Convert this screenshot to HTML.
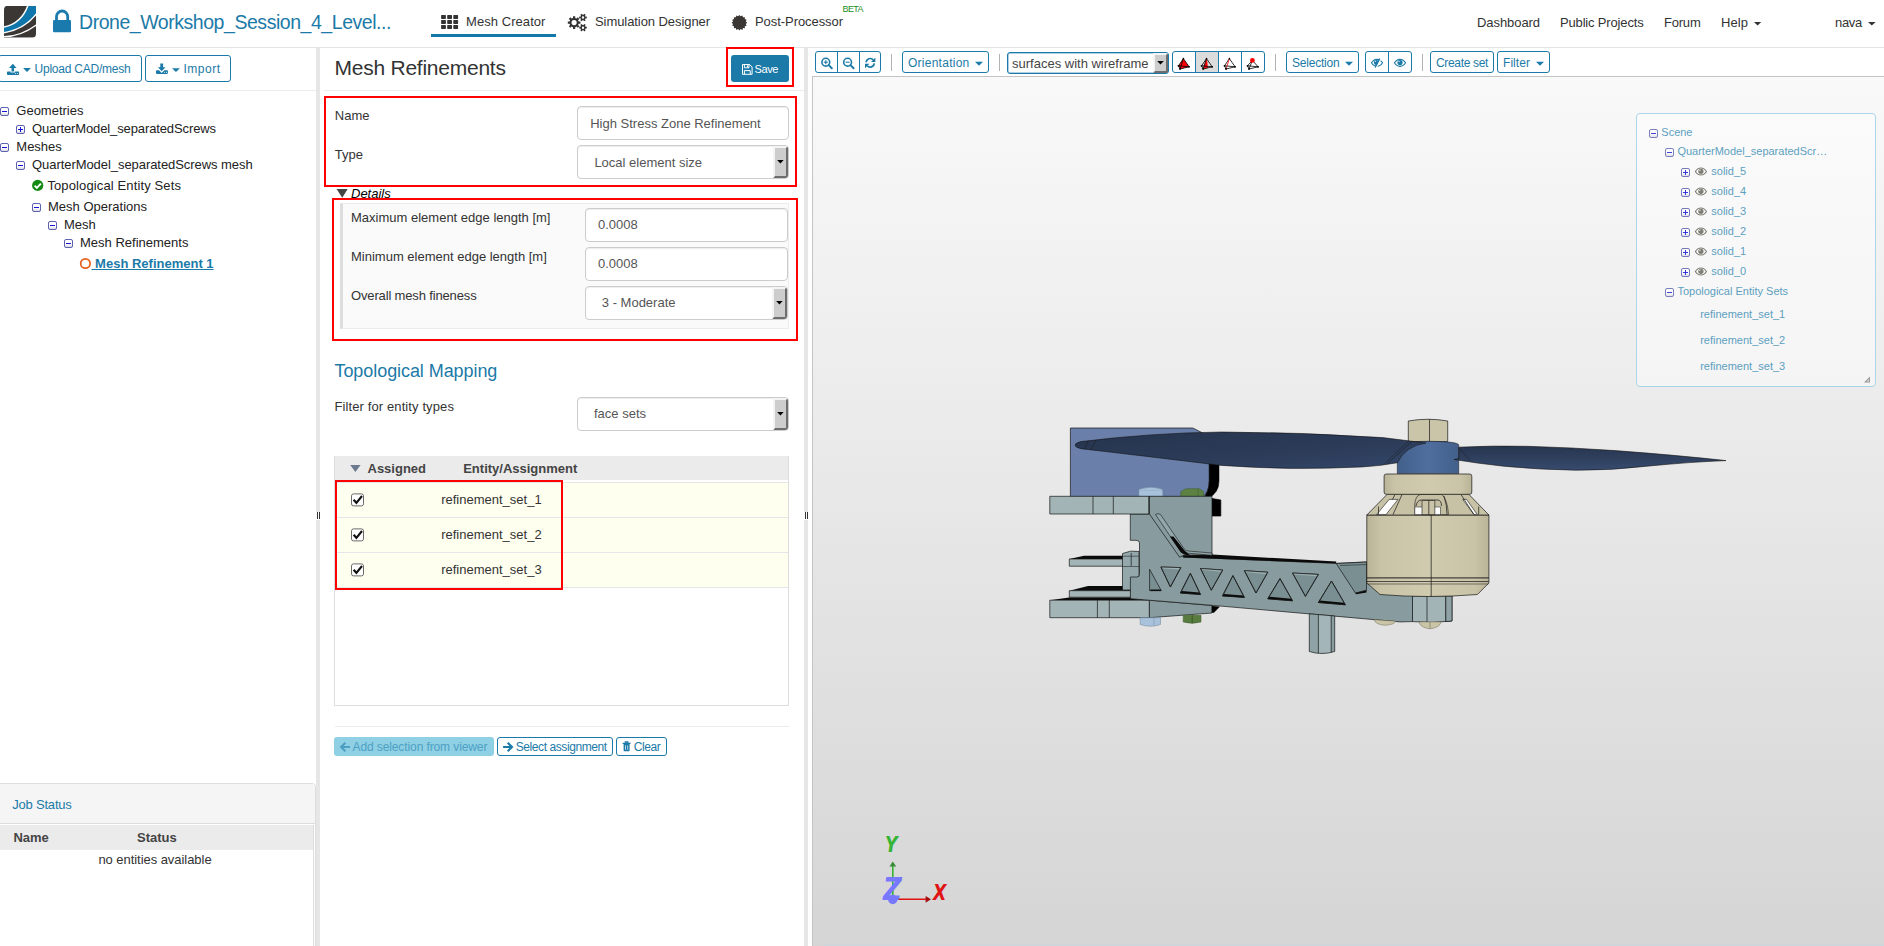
<!DOCTYPE html>
<html lang="en"><head><meta charset="utf-8"><title>SimScale Workbench</title>
<style>
html,body{margin:0;padding:0;}
body{width:1884px;height:946px;overflow:hidden;background:#fff;position:relative;font-family:"Liberation Sans",sans-serif;}
.t{position:absolute;white-space:nowrap;line-height:1;font-family:"Liberation Sans",sans-serif;}
.a{position:absolute;box-sizing:border-box;}
svg{position:absolute;overflow:visible;}

.btn{border:1px solid #1b7aa8;border-radius:3px;background:#fff;}
.inp{border:1px solid #ccc;border-radius:4px;background:#fff;box-shadow:inset 0 1px 1px rgba(0,0,0,.075);}
.red{border:2px solid #ff0000;}
.dd{background:#cdcdcd;border-top:2px solid #f4f4f4;border-left:2px solid #f4f4f4;border-right:2px solid #6e6c6c;border-bottom:2px solid #6e6c6c;border-radius:0 3px 3px 0;}
.sep{background:#b4b0b4;width:1px;}
.exp{border:1px solid #5a5ab4;border-radius:2px;background:linear-gradient(#fff,#e4e4f4);}

</style></head><body>
<div class="a " style="left:0px;top:47px;width:1884px;height:1px;background:#e4e4e4;"></div>
<div class="a " style="left:431px;top:34px;width:125px;height:3px;background:#1277a9;"></div>
<div class="a btn" style="left:-2px;top:55px;width:143.5px;height:26.5px;"></div>
<div class="a btn" style="left:145px;top:55px;width:85.5px;height:26.5px;"></div>
<div class="a " style="left:0px;top:90px;width:316px;height:1px;background:#ececec;"></div>
<div class="a " style="left:316px;top:48px;width:4px;height:898px;background:#e6e6e6;"></div>
<div class="a " style="left:316px;top:511.5px;width:4px;height:8px;background:#fff;"></div>
<div class="a " style="left:316.8px;top:512px;width:1px;height:7px;background:#333;"></div>
<div class="a " style="left:318.9px;top:512px;width:1px;height:7px;background:#333;"></div>
<div class="a " style="left:-1px;top:783.4px;width:316.5px;height:176.6px;background:#fff;border:1px solid #ddd;border-radius:0 4px 0 0;"></div>
<div class="a " style="left:0px;top:784.4px;width:314.5px;height:39.2px;background:#f5f5f5;border-bottom:1px solid #ddd;border-radius:0 3px 0 0;"></div>
<div class="a " style="left:0px;top:824.6px;width:312.5px;height:25.4px;background:#ebebeb;"></div>
<div class="a " style="left:312.5px;top:824.6px;width:1px;height:121.4px;background:#ddd;"></div>
<div class="a " style="left:324px;top:90px;width:480px;height:1px;background:#ececec;"></div>
<div class="a " style="left:731px;top:55px;width:58px;height:26.5px;background:#1b7aa8;border-radius:3px;"></div>
<div class="a red" style="left:726px;top:47px;width:68px;height:40px;"></div>
<div class="a red" style="left:324px;top:96px;width:473px;height:91px;"></div>
<div class="a inp" style="left:577px;top:106px;width:212px;height:34px;"></div>
<div class="a inp" style="left:577px;top:145px;width:212px;height:34px;"></div>
<div class="a dd" style="left:773px;top:146px;width:15px;height:32px;"></div>
<div class="a " style="left:340px;top:203px;width:448.7px;height:126px;background:#fafafa;border:1px solid #ececec;border-left:3px solid #ddd;"></div>
<div class="a inp" style="left:585px;top:208px;width:203px;height:34px;"></div>
<div class="a inp" style="left:585px;top:247px;width:203px;height:34px;"></div>
<div class="a inp" style="left:585px;top:286px;width:203px;height:34px;"></div>
<div class="a dd" style="left:772px;top:287px;width:15px;height:32px;"></div>
<div class="a red" style="left:332px;top:198px;width:466px;height:143px;"></div>
<div class="a inp" style="left:577px;top:397px;width:212px;height:34px;"></div>
<div class="a dd" style="left:773px;top:398px;width:15px;height:32px;"></div>
<div class="a " style="left:334px;top:456px;width:455px;height:250px;border:1px solid #ddd;background:#fff;"></div>
<div class="a " style="left:335px;top:456px;width:453px;height:24px;background:#ebebeb;"></div>
<div class="a " style="left:335px;top:482px;width:453px;height:36px;background:#fffff0;border-bottom:1px solid #e4e6e8;border-top:1px solid #e6e6e8;"></div>
<div class="a " style="left:335px;top:518px;width:453px;height:35px;background:#fffff0;border-bottom:1px solid #e4e6e8;"></div>
<div class="a " style="left:335px;top:553px;width:453px;height:35px;background:#fffff0;border-bottom:1px solid #e4e6e8;"></div>
<div class="a red" style="left:335px;top:480px;width:228px;height:110px;"></div>
<div class="a " style="left:334.5px;top:726px;width:454.2px;height:1px;background:#ececec;"></div>
<div class="a " style="left:334.3px;top:737px;width:159.5px;height:19px;background:#8fd0e4;border-radius:3px;"></div>
<div class="a btn" style="left:497.1px;top:737px;width:115.7px;height:19px;"></div>
<div class="a btn" style="left:616px;top:737px;width:50.7px;height:19px;"></div>
<div class="a " style="left:804px;top:48px;width:4px;height:898px;background:#e6e6e6;"></div>
<div class="a " style="left:804px;top:511.5px;width:4px;height:8px;background:#fff;"></div>
<div class="a " style="left:804.8px;top:512px;width:1px;height:7px;background:#333;"></div>
<div class="a " style="left:806.9px;top:512px;width:1px;height:7px;background:#333;"></div>
<div class="a " style="left:812px;top:76px;width:1072px;height:870px;background:linear-gradient(#f9f9f9,#d5d5d5);border-top:1px solid #c4c4c4;border-left:1px solid #c4c4c4;"></div>
<div class="a " style="left:824px;top:945px;width:1060px;height:1px;background:#c8d8df;"></div>
<div class="a btn" style="left:815px;top:51px;width:65.7px;height:22px;"></div>
<div class="a " style="left:837px;top:51px;width:1px;height:22px;background:#1b7aa8;"></div>
<div class="a " style="left:859px;top:51px;width:1px;height:22px;background:#1b7aa8;"></div>
<div class="a sep" style="left:891px;top:54px;width:1px;height:17px;"></div>
<div class="a btn" style="left:902px;top:51px;width:87px;height:22px;"></div>
<div class="a sep" style="left:999px;top:54px;width:1px;height:17px;"></div>
<div class="a " style="left:1007px;top:52px;width:162px;height:22px;border:1px solid #1b7aa8;border-radius:3px;background:#fff;box-shadow:inset 0 0 0 0.5px #5aa0c4;"></div>
<div class="a dd" style="left:1153px;top:53px;width:15px;height:20px;border-radius:0 2px 2px 0;"></div>
<div class="a btn" style="left:1172px;top:51px;width:93px;height:22px;"></div>
<div class="a " style="left:1195.5px;top:52px;width:22.5px;height:20px;background:#dcdcdc;"></div>
<div class="a " style="left:1195px;top:51px;width:1px;height:22px;background:#1b7aa8;"></div>
<div class="a " style="left:1218px;top:51px;width:1px;height:22px;background:#1b7aa8;"></div>
<div class="a " style="left:1241px;top:51px;width:1px;height:22px;background:#1b7aa8;"></div>
<div class="a sep" style="left:1275px;top:54px;width:1px;height:17px;"></div>
<div class="a btn" style="left:1286px;top:51px;width:73px;height:22px;"></div>
<div class="a btn" style="left:1365px;top:51px;width:46.5px;height:22px;"></div>
<div class="a " style="left:1388px;top:51px;width:1px;height:22px;background:#1b7aa8;"></div>
<div class="a sep" style="left:1422px;top:54px;width:1px;height:17px;"></div>
<div class="a btn" style="left:1430px;top:51px;width:63.7px;height:22px;"></div>
<div class="a btn" style="left:1497px;top:51px;width:52.7px;height:22px;"></div>
<div class="a " style="left:1636.3px;top:113px;width:239.3px;height:274.4px;border:1px solid #a9d6e8;border-radius:4px;background:rgba(255,255,255,0.45);"></div>
<svg style="left:0;top:0" width="1884" height="946" viewBox="0 0 1884 946"><g transform="translate(4,5.8)"><clipPath id="lgc"><path d="M4,0 H32 V28 Q32,32 28,32 H0 V4 Q0,0 4,0 Z"/></clipPath><g clip-path="url(#lgc)"><rect x="0" y="0" width="32" height="32" fill="#3b3734"/><path d="M0,21.6 Q17.8,17.6 24.4,0 L32,0 L32,8 Q20.5,23.5 0,27 Z" fill="#0f76ab"/><path d="M0,21.3 Q17.6,17.6 24,-0.5" fill="none" stroke="#fff" stroke-width="1.5"/><path d="M0,27 Q20.5,23.5 32.3,8.2" fill="none" stroke="#fff" stroke-width="1.4"/><path d="M0,30.9 Q17,30.6 32.3,19.2" fill="none" stroke="#fff" stroke-width="1.3"/></g></g>
<rect x="53" y="20" width="18" height="12.2" rx="1.2" fill="#1a7aad" stroke="none" stroke-width="1" />
<path d="M56.5,21 V16.6 A5.6,5.6 0 0 1 67.7,16.6 V21" fill="none" stroke="#1a7aad" stroke-width="2.8" />
<rect x="441.1" y="15.1" width="4.8" height="3.8" rx="0.6" fill="#333" stroke="none" stroke-width="1" />
<rect x="447.2" y="15.1" width="4.8" height="3.8" rx="0.6" fill="#333" stroke="none" stroke-width="1" />
<rect x="453.3" y="15.1" width="4.8" height="3.8" rx="0.6" fill="#333" stroke="none" stroke-width="1" />
<rect x="441.1" y="20.1" width="4.8" height="3.8" rx="0.6" fill="#333" stroke="none" stroke-width="1" />
<rect x="447.2" y="20.1" width="4.8" height="3.8" rx="0.6" fill="#333" stroke="none" stroke-width="1" />
<rect x="453.3" y="20.1" width="4.8" height="3.8" rx="0.6" fill="#333" stroke="none" stroke-width="1" />
<rect x="441.1" y="25.1" width="4.8" height="3.8" rx="0.6" fill="#333" stroke="none" stroke-width="1" />
<rect x="447.2" y="25.1" width="4.8" height="3.8" rx="0.6" fill="#333" stroke="none" stroke-width="1" />
<rect x="453.3" y="25.1" width="4.8" height="3.8" rx="0.6" fill="#333" stroke="none" stroke-width="1" />
<path d="M580.40,21.50 L580.40,23.70 L578.67,23.70 L578.11,25.06 L579.34,26.28 L577.78,27.84 L576.56,26.61 L575.20,27.17 L575.20,28.90 L573.00,28.90 L573.00,27.17 L571.64,26.61 L570.42,27.84 L568.86,26.28 L570.09,25.06 L569.53,23.70 L567.80,23.70 L567.80,21.50 L569.53,21.50 L570.09,20.14 L568.86,18.92 L570.42,17.36 L571.64,18.59 L573.00,18.03 L573.00,16.30 L575.20,16.30 L575.20,18.03 L576.56,18.59 L577.78,17.36 L579.34,18.92 L578.11,20.14 L578.67,21.50Z M576.70,22.60 A2.6,2.6 0 1 0 571.50,22.60 A2.6,2.6 0 1 0 576.70,22.60Z" fill="#333" fill-rule="evenodd"/>
<path d="M586.80,16.61 L586.80,18.39 L585.57,18.33 L585.01,19.31 L585.67,20.34 L584.13,21.23 L583.56,20.14 L582.44,20.14 L581.87,21.23 L580.33,20.34 L580.99,19.31 L580.43,18.33 L579.20,18.39 L579.20,16.61 L580.43,16.67 L580.99,15.69 L580.33,14.66 L581.87,13.77 L582.44,14.86 L583.56,14.86 L584.13,13.77 L585.67,14.66 L585.01,15.69 L585.57,16.67Z M584.20,17.50 A1.2,1.2 0 1 0 581.80,17.50 A1.2,1.2 0 1 0 584.20,17.50Z" fill="#333" fill-rule="evenodd"/>
<path d="M586.80,26.81 L586.80,28.59 L585.57,28.53 L585.01,29.51 L585.67,30.54 L584.13,31.43 L583.56,30.34 L582.44,30.34 L581.87,31.43 L580.33,30.54 L580.99,29.51 L580.43,28.53 L579.20,28.59 L579.20,26.81 L580.43,26.87 L580.99,25.89 L580.33,24.86 L581.87,23.97 L582.44,25.06 L583.56,25.06 L584.13,23.97 L585.67,24.86 L585.01,25.89 L585.57,26.87Z M584.20,27.70 A1.2,1.2 0 1 0 581.80,27.70 A1.2,1.2 0 1 0 584.20,27.70Z" fill="#333" fill-rule="evenodd"/>
<polygon points="747.20,22.70 745.78,23.97 746.61,25.68 744.80,26.31 744.92,28.22 743.01,28.10 742.38,29.91 740.67,29.08 739.40,30.50 738.13,29.08 736.42,29.91 735.79,28.10 733.88,28.22 734.00,26.31 732.19,25.68 733.02,23.97 731.60,22.70 733.02,21.43 732.19,19.72 734.00,19.09 733.88,17.18 735.79,17.30 736.42,15.49 738.13,16.32 739.40,14.90 740.67,16.32 742.38,15.49 743.01,17.30 744.92,17.18 744.80,19.09 746.61,19.72 745.78,21.43" fill="#3b3734" stroke="none" stroke-width="1" />
<polygon points="1754.00,22.00 1761.20,22.00 1757.60,25.60" fill="#333" stroke="none" stroke-width="1" />
<polygon points="1868.00,22.00 1875.60,22.00 1871.80,25.60" fill="#333" stroke="none" stroke-width="1" />
<polygon points="12.90,63.80 16.60,67.90 14.10,67.90 14.10,71.60 11.50,71.60 11.50,67.90 9.00,67.90" fill="#1b7aa8" stroke="none" stroke-width="1" />
<path d="M7.8,71.4 H10.6 V72.4 H15 V71.4 H18.3 Q19.1,71.4 19.1,72.2 V74.2 Q19.1,75 18.3,75 H7.8 Q7,75 7,74.2 V72.2 Q7,71.4 7.8,71.4 Z" fill="#1b7aa8" stroke="none" stroke-width="1" />
<rect x="15" y="73" width="0.9" height="0.9" rx="0" fill="#fff" stroke="none" stroke-width="1" />
<rect x="16.9" y="73" width="0.9" height="0.9" rx="0" fill="#fff" stroke="none" stroke-width="1" />
<polygon points="23.10,67.90 30.90,67.90 27.00,71.90" fill="#1b7aa8" stroke="none" stroke-width="1" />
<polygon points="160.30,63.60 163.10,63.60 163.10,67.20 165.50,67.20 161.70,71.30 157.90,67.20 160.30,67.20" fill="#1b7aa8" stroke="none" stroke-width="1" />
<path d="M156.8,70.3 H159 L161.7,73 L164.4,70.3 H167.1 Q167.9,70.3 167.9,71.1 V73.1 Q167.9,73.9 167.1,73.9 H156.8 Q156,73.9 156,73.1 V71.1 Q156,70.3 156.8,70.3 Z" fill="#1b7aa8" stroke="none" stroke-width="1" />
<rect x="164.2" y="71.9" width="0.9" height="0.9" rx="0" fill="#fff" stroke="none" stroke-width="1" />
<rect x="166" y="71.9" width="0.9" height="0.9" rx="0" fill="#fff" stroke="none" stroke-width="1" />
<polygon points="172.00,68.20 179.90,68.20 175.95,72.00" fill="#1b7aa8" stroke="none" stroke-width="1" />
<defs><linearGradient id="expg" x1="0" y1="0" x2="0" y2="1"><stop offset="0" stop-color="#fff"/><stop offset="0.55" stop-color="#fff"/><stop offset="1" stop-color="#d4d4dc"/></linearGradient></defs>
<g opacity="1.0"><defs></defs><rect x="0.5" y="107.5" width="8" height="8" rx="1.5" fill="url(#expg)" stroke="#5c62b0" stroke-width="1" /><rect x="2" y="111" width="5" height="1" rx="0" fill="#1414d8" stroke="none" stroke-width="1" /></g>
<g opacity="1.0"><defs></defs><rect x="16.5" y="125.5" width="8" height="8" rx="1.5" fill="url(#expg)" stroke="#5c62b0" stroke-width="1" /><rect x="18" y="129" width="5" height="1" rx="0" fill="#1414d8" stroke="none" stroke-width="1" /><rect x="20" y="127" width="1" height="5" rx="0" fill="#1414d8" stroke="none" stroke-width="1" /></g>
<g opacity="1.0"><defs></defs><rect x="0.5" y="143.5" width="8" height="8" rx="1.5" fill="url(#expg)" stroke="#5c62b0" stroke-width="1" /><rect x="2" y="147" width="5" height="1" rx="0" fill="#1414d8" stroke="none" stroke-width="1" /></g>
<g opacity="1.0"><defs></defs><rect x="16.5" y="161.5" width="8" height="8" rx="1.5" fill="url(#expg)" stroke="#5c62b0" stroke-width="1" /><rect x="18" y="165" width="5" height="1" rx="0" fill="#1414d8" stroke="none" stroke-width="1" /></g>
<g opacity="1.0"><defs></defs><rect x="32.5" y="203.5" width="8" height="8" rx="1.5" fill="url(#expg)" stroke="#5c62b0" stroke-width="1" /><rect x="34" y="207" width="5" height="1" rx="0" fill="#1414d8" stroke="none" stroke-width="1" /></g>
<g opacity="1.0"><defs></defs><rect x="48.5" y="221.5" width="8" height="8" rx="1.5" fill="url(#expg)" stroke="#5c62b0" stroke-width="1" /><rect x="50" y="225" width="5" height="1" rx="0" fill="#1414d8" stroke="none" stroke-width="1" /></g>
<g opacity="1.0"><defs></defs><rect x="64.5" y="239.5" width="8" height="8" rx="1.5" fill="url(#expg)" stroke="#5c62b0" stroke-width="1" /><rect x="66" y="243" width="5" height="1" rx="0" fill="#1414d8" stroke="none" stroke-width="1" /></g>
<circle cx="37.7" cy="185.4" r="5.6" fill="#138a13" stroke="none" stroke-width="1" />
<path d="M34.6,185.6 L36.8,187.8 L40.9,183.6" fill="none" stroke="#fff" stroke-width="1.9" stroke-linecap="butt" stroke-linejoin="miter"/>
<circle cx="85.4" cy="263.5" r="4.7" fill="none" stroke="#e8601c" stroke-width="1.7" />
<path d="M742.5,64.5 H749.6 L752.1,67 V74.3 H742.5 Z" fill="none" stroke="#fff" stroke-width="1" />
<path d="M744.4,64.5 V67.8 H749 V64.5" fill="none" stroke="#fff" stroke-width="1" />
<rect x="746.9" y="65.3" width="1.2" height="1.8" rx="0" fill="#fff" stroke="none" stroke-width="1" />
<path d="M744.4,74.3 V70.6 H750.2 V74.3" fill="none" stroke="#fff" stroke-width="1" />
<polygon points="336.70,189.00 347.70,189.00 342.20,197.80" fill="#444" stroke="none" stroke-width="1" />
<polygon points="350.20,465.00 360.60,465.00 355.40,472.00" fill="#6b7a8f" stroke="none" stroke-width="1" />
<rect x="351.5" y="493.9" width="12" height="12" rx="2" fill="#fff" stroke="#6a6a6a" stroke-width="1" />
<path d="M353.6,499.7 L356.4,502.79999999999995 L362.0,496.0" fill="none" stroke="#111" stroke-width="2.1" />
<rect x="351.5" y="528.9" width="12" height="12" rx="2" fill="#fff" stroke="#6a6a6a" stroke-width="1" />
<path d="M353.6,534.6999999999999 L356.4,537.8 L362.0,531.0" fill="none" stroke="#111" stroke-width="2.1" />
<rect x="351.5" y="563.9" width="12" height="12" rx="2" fill="#fff" stroke="#6a6a6a" stroke-width="1" />
<path d="M353.6,569.6999999999999 L356.4,572.8 L362.0,566.0" fill="none" stroke="#111" stroke-width="2.1" />
<polygon points="777.10,160.00 783.70,160.00 780.40,163.60" fill="#000" stroke="none" stroke-width="1" />
<polygon points="776.10,301.00 782.70,301.00 779.40,304.60" fill="#000" stroke="none" stroke-width="1" />
<polygon points="777.10,412.00 783.70,412.00 780.40,415.60" fill="#000" stroke="none" stroke-width="1" />
<polygon points="1157.20,60.90 1163.80,60.90 1160.50,64.50" fill="#000" stroke="none" stroke-width="1" />
<path d="M350.0,747 H341.4 M345.4,742.8 L341.09999999999997,747 L345.4,751.2" fill="none" stroke="#4da0c4" stroke-width="2.1" opacity="1" stroke-linejoin="miter"/>
<path d="M503.1,747 H511.70000000000005 M507.70000000000005,742.8 L512.0,747 L507.70000000000005,751.2" fill="none" stroke="#1b7aa8" stroke-width="2.1" opacity="1" stroke-linejoin="miter"/>
<path d="M622.6,743.4 H630.6 M625.3,743.2 V741.9 H627.9 V743.2" fill="none" stroke="#1b7aa8" stroke-width="1.2" />
<path d="M623.6,744 V750.3 Q623.6,751.2 624.5,751.2 H628.7 Q629.6,751.2 629.6,750.3 V744 Z" fill="#1b7aa8" stroke="none" stroke-width="1" />
<line x1="625.5" y1="745.3" x2="625.5" y2="749.8" stroke="#fff" stroke-width="0.7" />
<line x1="627.7" y1="745.3" x2="627.7" y2="749.8" stroke="#fff" stroke-width="0.7" />
<circle cx="825.8" cy="62.2" r="3.9" fill="none" stroke="#1b7aa8" stroke-width="1.6" /><line x1="828.7" y1="65.1" x2="831.8" y2="68.2" stroke="#1b7aa8" stroke-width="2" stroke-linecap="round"/><line x1="823.8" y1="62.2" x2="827.8" y2="62.2" stroke="#1b7aa8" stroke-width="1.1" /><line x1="825.8" y1="60.2" x2="825.8" y2="64.2" stroke="#1b7aa8" stroke-width="1.1" />
<circle cx="847.6" cy="62.2" r="3.9" fill="none" stroke="#1b7aa8" stroke-width="1.6" /><line x1="850.5" y1="65.1" x2="853.6" y2="68.2" stroke="#1b7aa8" stroke-width="2" stroke-linecap="round"/><line x1="845.6" y1="62.2" x2="849.6" y2="62.2" stroke="#1b7aa8" stroke-width="1.1" />
<path d="M866.2,62.199999999999996 A4.0,4.0 0 0 1 873.2,59.9" fill="none" stroke="#1b7aa8" stroke-width="1.7" />
<polygon points="875.40,57.40 875.40,61.90 871.10,61.90" fill="#1b7aa8" stroke="none" stroke-width="1" />
<path d="M874.2,63.4 A4.0,4.0 0 0 1 867.2,65.7" fill="none" stroke="#1b7aa8" stroke-width="1.7" />
<polygon points="865.00,68.20 865.00,63.70 869.30,63.70" fill="#1b7aa8" stroke="none" stroke-width="1" />
<polygon points="975.00,61.80 983.00,61.80 979.00,65.80" fill="#1b7aa8" stroke="none" stroke-width="1" />
<polygon points="1345.00,61.80 1353.00,61.80 1349.00,65.80" fill="#1b7aa8" stroke="none" stroke-width="1" />
<polygon points="1536.00,61.80 1544.00,61.80 1540.00,65.80" fill="#1b7aa8" stroke="none" stroke-width="1" />
<polygon points="1183.40,58.60 1178.50,65.80 1180.00,69.00 1189.10,66.80" fill="#ff0000" stroke="none" stroke-width="1" /><line x1="1183.4" y1="58.6" x2="1178.5" y2="65.8" stroke="#000" stroke-width="0.8" /><line x1="1183.4" y1="58.6" x2="1180" y2="69" stroke="#000" stroke-width="0.8" /><line x1="1183.4" y1="58.6" x2="1189.1" y2="66.8" stroke="#000" stroke-width="0.8" /><line x1="1178.5" y1="65.8" x2="1180" y2="69" stroke="#000" stroke-width="0.8" /><line x1="1180" y1="69" x2="1189.1" y2="66.8" stroke="#000" stroke-width="0.8" /><line x1="1178.5" y1="65.8" x2="1189.1" y2="66.8" stroke="#000" stroke-width="0.8" /><circle cx="1178.5" cy="65.8" r="0.9" fill="#000" stroke="none" stroke-width="1" /><circle cx="1180" cy="69" r="0.9" fill="#000" stroke="none" stroke-width="1" /><circle cx="1189.1" cy="66.8" r="0.9" fill="#000" stroke="none" stroke-width="1" /><circle cx="1183.4" cy="58.6" r="0.8" fill="#000" stroke="none" stroke-width="1" />
<polygon points="1206.50,58.60 1203.10,69.00 1207.80,68.00 1207.40,62.00" fill="#ff0000" stroke="none" stroke-width="1" /><line x1="1206.5" y1="58.6" x2="1201.6" y2="65.8" stroke="#000" stroke-width="0.8" /><line x1="1206.5" y1="58.6" x2="1203.1" y2="69" stroke="#000" stroke-width="0.8" /><line x1="1206.5" y1="58.6" x2="1212.2" y2="66.8" stroke="#000" stroke-width="0.8" /><line x1="1201.6" y1="65.8" x2="1203.1" y2="69" stroke="#000" stroke-width="0.8" /><line x1="1203.1" y1="69" x2="1212.2" y2="66.8" stroke="#000" stroke-width="0.8" /><line x1="1201.6" y1="65.8" x2="1212.2" y2="66.8" stroke="#000" stroke-width="0.8" /><circle cx="1201.6" cy="65.8" r="0.9" fill="#000" stroke="none" stroke-width="1" /><circle cx="1203.1" cy="69" r="0.9" fill="#000" stroke="none" stroke-width="1" /><circle cx="1212.2" cy="66.8" r="0.9" fill="#000" stroke="none" stroke-width="1" /><circle cx="1206.5" cy="58.6" r="0.8" fill="#000" stroke="none" stroke-width="1" />
<line x1="1229.4" y1="58.6" x2="1224.5" y2="65.8" stroke="#000" stroke-width="0.8" /><line x1="1229.4" y1="58.6" x2="1226" y2="69" stroke="#ff0000" stroke-width="0.8" /><line x1="1229.4" y1="58.6" x2="1235.1" y2="66.8" stroke="#000" stroke-width="0.8" /><line x1="1224.5" y1="65.8" x2="1226" y2="69" stroke="#000" stroke-width="0.8" /><line x1="1226" y1="69" x2="1235.1" y2="66.8" stroke="#000" stroke-width="0.8" /><line x1="1224.5" y1="65.8" x2="1235.1" y2="66.8" stroke="#000" stroke-width="0.8" /><circle cx="1224.5" cy="65.8" r="0.9" fill="#000" stroke="none" stroke-width="1" /><circle cx="1226" cy="69" r="0.9" fill="#000" stroke="none" stroke-width="1" /><circle cx="1235.1" cy="66.8" r="0.9" fill="#000" stroke="none" stroke-width="1" /><circle cx="1229.4" cy="58.6" r="0.8" fill="#000" stroke="none" stroke-width="1" />
<line x1="1252.4" y1="60.4" x2="1247.5" y2="65.8" stroke="#000" stroke-width="0.8" /><line x1="1252.4" y1="60.4" x2="1249" y2="69" stroke="#000" stroke-width="0.8" /><line x1="1252.4" y1="60.4" x2="1258.1" y2="66.8" stroke="#000" stroke-width="0.8" /><line x1="1247.5" y1="65.8" x2="1249" y2="69" stroke="#000" stroke-width="0.8" /><line x1="1249" y1="69" x2="1258.1" y2="66.8" stroke="#000" stroke-width="0.8" /><line x1="1247.5" y1="65.8" x2="1258.1" y2="66.8" stroke="#000" stroke-width="0.8" /><circle cx="1247.5" cy="65.8" r="0.9" fill="#000" stroke="none" stroke-width="1" /><circle cx="1249" cy="69" r="0.9" fill="#000" stroke="none" stroke-width="1" /><circle cx="1258.1" cy="66.8" r="0.9" fill="#000" stroke="none" stroke-width="1" /><circle cx="1252.4" cy="60.4" r="2.4" fill="#ff0000" stroke="none" stroke-width="1" />
<g opacity="1"><path d="M1371.5,62.8 C1374.25,58.13333333333333 1379.75,58.13333333333333 1382.5,62.8 C1379.75,67.46666666666667 1374.25,67.46666666666667 1371.5,62.8 Z" fill="none" stroke="#1b7aa8" stroke-width="1.15" /><circle cx="1376.4" cy="62.6" r="2.5" fill="#1b7aa8" stroke="none" stroke-width="1" /><circle cx="1375.5" cy="61.4" r="0.7" fill="#fff" stroke="none" stroke-width="1" opacity="0.7"/><line x1="1381" y1="58.5" x2="1376.4" y2="67.4" stroke="#fff" stroke-width="1.5" /><line x1="1379.7" y1="58.6" x2="1375.1" y2="67.5" stroke="#1b7aa8" stroke-width="1.4" /></g>
<g opacity="1"><path d="M1394.5,62.8 C1397.25,58.13333333333333 1402.75,58.13333333333333 1405.5,62.8 C1402.75,67.46666666666667 1397.25,67.46666666666667 1394.5,62.8 Z" fill="none" stroke="#1b7aa8" stroke-width="1.15" /><circle cx="1400" cy="62.6" r="2.6" fill="#1b7aa8" stroke="none" stroke-width="1" /><circle cx="1399" cy="61.5" r="0.75" fill="#fff" stroke="none" stroke-width="1" opacity="0.75"/></g>
<g opacity="0.8"><defs></defs><rect x="1649.5" y="129.5" width="8" height="8" rx="1.5" fill="url(#expg)" stroke="#5c62b0" stroke-width="1" /><rect x="1651" y="133" width="5" height="1" rx="0" fill="#1414d8" stroke="none" stroke-width="1" /></g>
<g opacity="0.8"><defs></defs><rect x="1665.5" y="148.5" width="8" height="8" rx="1.5" fill="url(#expg)" stroke="#5c62b0" stroke-width="1" /><rect x="1667" y="152" width="5" height="1" rx="0" fill="#1414d8" stroke="none" stroke-width="1" /></g>
<g opacity="0.8"><defs></defs><rect x="1665.5" y="288.5" width="8" height="8" rx="1.5" fill="url(#expg)" stroke="#5c62b0" stroke-width="1" /><rect x="1667" y="292" width="5" height="1" rx="0" fill="#1414d8" stroke="none" stroke-width="1" /></g>
<g opacity="0.85"><defs></defs><rect x="1681.5" y="168.5" width="8" height="8" rx="1.5" fill="url(#expg)" stroke="#5c62b0" stroke-width="1" /><rect x="1683" y="172" width="5" height="1" rx="0" fill="#1414d8" stroke="none" stroke-width="1" /><rect x="1685" y="170" width="1" height="5" rx="0" fill="#1414d8" stroke="none" stroke-width="1" /></g>
<g opacity="1"><path d="M1695.4,171.5 C1698.15,166.83333333333334 1703.65,166.83333333333334 1706.4,171.5 C1703.65,176.16666666666666 1698.15,176.16666666666666 1695.4,171.5 Z" fill="none" stroke="#7d7d74" stroke-width="1.15" /><circle cx="1700.9" cy="171.3" r="2.6" fill="#7d7d74" stroke="none" stroke-width="1" /><circle cx="1699.9" cy="170.2" r="0.75" fill="#fff" stroke="none" stroke-width="1" opacity="0.75"/></g>
<g opacity="0.85"><defs></defs><rect x="1681.5" y="188.5" width="8" height="8" rx="1.5" fill="url(#expg)" stroke="#5c62b0" stroke-width="1" /><rect x="1683" y="192" width="5" height="1" rx="0" fill="#1414d8" stroke="none" stroke-width="1" /><rect x="1685" y="190" width="1" height="5" rx="0" fill="#1414d8" stroke="none" stroke-width="1" /></g>
<g opacity="1"><path d="M1695.4,191.5 C1698.15,186.83333333333334 1703.65,186.83333333333334 1706.4,191.5 C1703.65,196.16666666666666 1698.15,196.16666666666666 1695.4,191.5 Z" fill="none" stroke="#7d7d74" stroke-width="1.15" /><circle cx="1700.9" cy="191.3" r="2.6" fill="#7d7d74" stroke="none" stroke-width="1" /><circle cx="1699.9" cy="190.2" r="0.75" fill="#fff" stroke="none" stroke-width="1" opacity="0.75"/></g>
<g opacity="0.85"><defs></defs><rect x="1681.5" y="208.5" width="8" height="8" rx="1.5" fill="url(#expg)" stroke="#5c62b0" stroke-width="1" /><rect x="1683" y="212" width="5" height="1" rx="0" fill="#1414d8" stroke="none" stroke-width="1" /><rect x="1685" y="210" width="1" height="5" rx="0" fill="#1414d8" stroke="none" stroke-width="1" /></g>
<g opacity="1"><path d="M1695.4,211.5 C1698.15,206.83333333333334 1703.65,206.83333333333334 1706.4,211.5 C1703.65,216.16666666666666 1698.15,216.16666666666666 1695.4,211.5 Z" fill="none" stroke="#7d7d74" stroke-width="1.15" /><circle cx="1700.9" cy="211.3" r="2.6" fill="#7d7d74" stroke="none" stroke-width="1" /><circle cx="1699.9" cy="210.2" r="0.75" fill="#fff" stroke="none" stroke-width="1" opacity="0.75"/></g>
<g opacity="0.85"><defs></defs><rect x="1681.5" y="228.5" width="8" height="8" rx="1.5" fill="url(#expg)" stroke="#5c62b0" stroke-width="1" /><rect x="1683" y="232" width="5" height="1" rx="0" fill="#1414d8" stroke="none" stroke-width="1" /><rect x="1685" y="230" width="1" height="5" rx="0" fill="#1414d8" stroke="none" stroke-width="1" /></g>
<g opacity="1"><path d="M1695.4,231.5 C1698.15,226.83333333333334 1703.65,226.83333333333334 1706.4,231.5 C1703.65,236.16666666666666 1698.15,236.16666666666666 1695.4,231.5 Z" fill="none" stroke="#7d7d74" stroke-width="1.15" /><circle cx="1700.9" cy="231.3" r="2.6" fill="#7d7d74" stroke="none" stroke-width="1" /><circle cx="1699.9" cy="230.2" r="0.75" fill="#fff" stroke="none" stroke-width="1" opacity="0.75"/></g>
<g opacity="0.85"><defs></defs><rect x="1681.5" y="248.5" width="8" height="8" rx="1.5" fill="url(#expg)" stroke="#5c62b0" stroke-width="1" /><rect x="1683" y="252" width="5" height="1" rx="0" fill="#1414d8" stroke="none" stroke-width="1" /><rect x="1685" y="250" width="1" height="5" rx="0" fill="#1414d8" stroke="none" stroke-width="1" /></g>
<g opacity="1"><path d="M1695.4,251.5 C1698.15,246.83333333333334 1703.65,246.83333333333334 1706.4,251.5 C1703.65,256.1666666666667 1698.15,256.1666666666667 1695.4,251.5 Z" fill="none" stroke="#7d7d74" stroke-width="1.15" /><circle cx="1700.9" cy="251.3" r="2.6" fill="#7d7d74" stroke="none" stroke-width="1" /><circle cx="1699.9" cy="250.2" r="0.75" fill="#fff" stroke="none" stroke-width="1" opacity="0.75"/></g>
<g opacity="0.85"><defs></defs><rect x="1681.5" y="268.5" width="8" height="8" rx="1.5" fill="url(#expg)" stroke="#5c62b0" stroke-width="1" /><rect x="1683" y="272" width="5" height="1" rx="0" fill="#1414d8" stroke="none" stroke-width="1" /><rect x="1685" y="270" width="1" height="5" rx="0" fill="#1414d8" stroke="none" stroke-width="1" /></g>
<g opacity="1"><path d="M1695.4,271.5 C1698.15,266.8333333333333 1703.65,266.8333333333333 1706.4,271.5 C1703.65,276.1666666666667 1698.15,276.1666666666667 1695.4,271.5 Z" fill="none" stroke="#7d7d74" stroke-width="1.15" /><circle cx="1700.9" cy="271.3" r="2.6" fill="#7d7d74" stroke="none" stroke-width="1" /><circle cx="1699.9" cy="270.2" r="0.75" fill="#fff" stroke="none" stroke-width="1" opacity="0.75"/></g>
<polygon points="1870.00,376.50 1870.00,382.50 1864.00,382.50" fill="#999" stroke="none" stroke-width="1" />
<polygon points="1869.00,379.00 1869.00,381.50 1866.50,381.50" fill="#ddd" stroke="none" stroke-width="1" />
<line x1="892.8" y1="866" x2="892.8" y2="899" stroke="#32b432" stroke-width="1.6" />
<polygon points="892.80,861.40 896.20,866.40 889.40,866.40" fill="#3a8a3a" stroke="none" stroke-width="1" />
<line x1="893" y1="899.3" x2="926" y2="899.3" stroke="#e01414" stroke-width="1.6" />
<polygon points="931.00,899.30 925.60,895.90 925.60,902.70" fill="#a01010" stroke="none" stroke-width="1" />
<circle cx="892.8" cy="899.5" r="4.7" fill="#7878ff" stroke="none" stroke-width="1" />
<g id="drone"><defs>
<linearGradient id="bladeL" x1="0" y1="0" x2="1" y2="1"><stop offset="0" stop-color="#26344d"/><stop offset="0.6" stop-color="#2c3c59"/><stop offset="1" stop-color="#34476a"/></linearGradient>
<linearGradient id="bladeR" x1="0" y1="0" x2="0" y2="1"><stop offset="0" stop-color="#27354e"/><stop offset="1" stop-color="#374b6e"/></linearGradient>
<linearGradient id="hubg" x1="0" y1="0" x2="1" y2="0"><stop offset="0" stop-color="#43608c"/><stop offset="0.5" stop-color="#4f6e9e"/><stop offset="1" stop-color="#43608c"/></linearGradient>
<linearGradient id="motg" x1="0" y1="0" x2="1" y2="0"><stop offset="0" stop-color="#b9b398"/><stop offset="0.12" stop-color="#c9c3a7"/><stop offset="0.5" stop-color="#d0caae"/><stop offset="0.88" stop-color="#c9c3a7"/><stop offset="1" stop-color="#b9b398"/></linearGradient>
<linearGradient id="legg" x1="0" y1="0" x2="1" y2="0"><stop offset="0" stop-color="#8fa3a6"/><stop offset="0.34" stop-color="#8fa3a6"/><stop offset="0.36" stop-color="#a3b5b8"/><stop offset="0.85" stop-color="#a3b5b8"/><stop offset="0.87" stop-color="#8a9ea1"/><stop offset="1" stop-color="#8a9ea1"/></linearGradient>
</defs>
<path d="M1070.4,428 H1192.8 L1202.3,432.8 L1209.3,440 V481 Q1209,492 1203,496.5 H1070.4 Z" fill="#6a80aa" stroke="#151515" stroke-width="0.7" stroke-linejoin="round" />
<path d="M1209.3,462 H1219 V481 Q1219,493 1208,498.5 H1202.5 Q1209.3,492 1209.3,481 Z" fill="#000" stroke="#000" stroke-width="0.5" stroke-linejoin="round" />
<path d="M1212,498.5 L1220.8,500 V516 H1212 Z" fill="#000" stroke="#000" stroke-width="0.7" stroke-linejoin="round" />
<path d="M1138.8,496.3 V490.5 Q1138.8,488.6 1142,488.4 Q1150.8,486 1159.6,488.4 Q1162.8,488.6 1162.8,490.5 V496.3 Z" fill="#a8c2dc" stroke="#6d8196" stroke-width="0.5" stroke-linejoin="round" />
<line x1="1139.5" y1="490.3" x2="1162.2" y2="490.3" stroke="#90a8c0" stroke-width="0.6"/>
<path d="M1180.8,496.6 V491.6 L1186,488.7 H1199.5 L1203.6,491.6 V496.6 Z" fill="#5c8243" stroke="#3c5a2a" stroke-width="0.5" stroke-linejoin="round" />
<line x1="1198.0" y1="489.5" x2="1198.0" y2="496.6" stroke="#3c5a2a" stroke-width="0.6"/>
<polygon points="1069.3,559.0 1084.0,555.8 1131.2,555.8 1131.2,559.0" fill="#0a0a0a" stroke="none" stroke-width="0.7" stroke-linejoin="round" />
<path d="M1069.3,559 H1131.2 V566.2 H1069.3 Z" fill="#a3b4b6" stroke="#151515" stroke-width="0.7" stroke-linejoin="round" />
<polygon points="1069.3,590.7 1088.0,586.0 1131.0,586.0 1131.0,590.7" fill="#0a0a0a" stroke="none" stroke-width="0.7" stroke-linejoin="round" />
<path d="M1069.3,590.7 H1131 V597.2 H1069.3 Z" fill="#a3b4b6" stroke="#151515" stroke-width="0.7" stroke-linejoin="round" />
<path d="M1122.5,553.5 Q1130.7,549.8 1139,551.5 V590 H1122.5 Z" fill="#94a8ab" stroke="#151515" stroke-width="0.7" stroke-linejoin="round" />
<line x1="1131.2" y1="553.0" x2="1131.2" y2="566.0" stroke="#151515" stroke-width="0.7"/>
<line x1="1122.5" y1="556.2" x2="1139.0" y2="556.2" stroke="#151515" stroke-width="0.5"/>
<line x1="1122.5" y1="566.5" x2="1139.0" y2="566.5" stroke="#151515" stroke-width="0.5"/>
<polygon points="1049.8,600.2 1069.0,597.4 1131.0,597.4 1149.4,600.2" fill="#0a0a0a" stroke="none" stroke-width="0.7" stroke-linejoin="round" />
<path d="M1049.8,600.2 H1149.4 V617.7 H1049.8 Z" fill="#a3b4b6" stroke="#151515" stroke-width="0.7" stroke-linejoin="round" />
<line x1="1097.4" y1="600.2" x2="1097.4" y2="617.7" stroke="#151515" stroke-width="0.7"/>
<line x1="1109.3" y1="600.2" x2="1109.3" y2="617.7" stroke="#151515" stroke-width="0.7"/>
<path d="M1149.4,600.2 L1212,605.5 V613 L1149.4,617.7 Z" fill="#889c9f" stroke="#151515" stroke-width="0.7" stroke-linejoin="round" />
<path d="M1212,606 L1219.5,606.8 L1214,612.5 H1212 Z" fill="#000" stroke="#000" stroke-width="0.4" stroke-linejoin="round" />
<path d="M1140.2,617.7 H1160.5 V624.5 Q1150.3,628 1140.2,624.5 Z" fill="#a8c2dc" stroke="#6d8196" stroke-width="0.5" stroke-linejoin="round" />
<line x1="1154.0" y1="617.7" x2="1154.0" y2="625.6" stroke="#7f95ab" stroke-width="0.6"/>
<path d="M1183.2,615.3 H1201 V622 Q1192,624.6 1183.2,622 Z" fill="#587c40" stroke="#3c5a2a" stroke-width="0.5" stroke-linejoin="round" />
<line x1="1192.2" y1="615.3" x2="1192.2" y2="623.4" stroke="#2c4a1c" stroke-width="0.7"/>
<path d="M1149,496.3 H1212 V555.3 L1183.5,555.3 L1183,557 L1336.2,563.4 L1366.5,561.9 L1412.5,561.9 L1412.5,621.6 L1400,621.9 L1212,605.3 L1130.4,598.7 V577 H1137 Q1139.5,577 1139.5,574.5 V543 Q1139.5,540.3 1136,540.3 H1130.3 V514 H1149 Z" fill="#889c9f" stroke="#151515" stroke-width="0.7" stroke-linejoin="round" />
<polygon points="1183.0,555.6 1212.0,554.6 1336.2,561.6 1336.2,563.6 1183.3,557.6" fill="#0a0a0a" stroke="none" stroke-width="0.7" stroke-linejoin="round" />
<path d="M1336.2,563.5 L1366.5,562 V590.2 L1355.4,593 Z" fill="#7a8f92" stroke="#151515" stroke-width="0.7" stroke-linejoin="round" />
<line x1="1340.0" y1="565.5" x2="1366.5" y2="564.5" stroke="#151515" stroke-width="0.5"/>
<polygon points="1355.4,593.0 1366.5,590.2 1366.5,592.4 1356.0,594.2" fill="#0a0a0a" stroke="none" stroke-width="0.7" stroke-linejoin="round" />
<path d="M1049.8,496.3 H1149 V514 H1049.8 Z" fill="#a3b4b6" stroke="#151515" stroke-width="0.7" stroke-linejoin="round" />
<line x1="1093.0" y1="496.3" x2="1093.0" y2="514.0" stroke="#151515" stroke-width="0.7"/>
<line x1="1113.3" y1="496.3" x2="1113.3" y2="514.0" stroke="#151515" stroke-width="0.7"/>
<line x1="1149.0" y1="496.3" x2="1149.0" y2="514.0" stroke="#151515" stroke-width="0.7"/>
<path d="M1149.4,514 L1179.6,557.2 L1184,555.3 L1212,555.3" fill="none" stroke="#151515" stroke-width="0.7" stroke-linejoin="round" />
<path d="M1155.5,514.5 L1180.5,551.5 Q1183,554.5 1186,553 L1212,555.3 L1212,553 L1188,551 Q1185.5,551 1184,548.7 L1160.5,514.5 Q1158,512.8 1155.5,514.5 Z" fill="#93a7aa" stroke="#151515" stroke-width="0.6" stroke-linejoin="round" />
<polygon points="1170.0,536.5 1181.0,552.5 1185.0,554.8 1190.0,555.3 1184.5,550.5 1173.5,536.5" fill="#0a0a0a" stroke="none" stroke-width="0.7" stroke-linejoin="round" />
<polygon points="1149.6,569.3 1161.3,590.7 1149.6,590.7" fill="#7a8f92" stroke="#151515" stroke-width="0.7" stroke-linejoin="round" />
<line x1="1150.5" y1="590.2" x2="1161.0" y2="590.2" stroke="#0a0a0a" stroke-width="1.4"/>
<polygon points="1160.9,567.0 1180.8,567.6 1170.4,587.0" fill="#7a8f92" stroke="#151515" stroke-width="0.7" stroke-linejoin="round" />
<polygon points="1160.9,567.0 1180.8,567.6 1178.6,569.4 1163.1,568.6" fill="#9db0b3" stroke="none" stroke-width="0.7" stroke-linejoin="round" />
<polygon points="1160.9,567.0 1180.8,567.6 1170.4,587.0" fill="none" stroke="#151515" stroke-width="0.7" stroke-linejoin="round" />
<polygon points="1200.5,568.5 1222.7,570.0 1211.3,590.2" fill="#7a8f92" stroke="#151515" stroke-width="0.7" stroke-linejoin="round" />
<polygon points="1200.5,568.5 1222.7,570.0 1220.5,571.8 1202.7,570.1" fill="#9db0b3" stroke="none" stroke-width="0.7" stroke-linejoin="round" />
<polygon points="1200.5,568.5 1222.7,570.0 1211.3,590.2" fill="none" stroke="#151515" stroke-width="0.7" stroke-linejoin="round" />
<polygon points="1244.4,570.7 1267.8,572.2 1256.0,593.0" fill="#7a8f92" stroke="#151515" stroke-width="0.7" stroke-linejoin="round" />
<polygon points="1244.4,570.7 1267.8,572.2 1265.6,574.0 1246.6,572.3" fill="#9db0b3" stroke="none" stroke-width="0.7" stroke-linejoin="round" />
<polygon points="1244.4,570.7 1267.8,572.2 1256.0,593.0" fill="none" stroke="#151515" stroke-width="0.7" stroke-linejoin="round" />
<polygon points="1292.5,573.0 1318.4,574.4 1305.4,596.3" fill="#7a8f92" stroke="#151515" stroke-width="0.7" stroke-linejoin="round" />
<polygon points="1292.5,573.0 1318.4,574.4 1316.2,576.2 1294.7,574.6" fill="#9db0b3" stroke="none" stroke-width="0.7" stroke-linejoin="round" />
<polygon points="1292.5,573.0 1318.4,574.4 1305.4,596.3" fill="none" stroke="#151515" stroke-width="0.7" stroke-linejoin="round" />
<polygon points="1190.4,573.3 1180.4,593.0 1200.5,594.5" fill="#7a8f92" stroke="#151515" stroke-width="0.7" stroke-linejoin="round" />
<polygon points="1180.4,593.0 1200.5,594.5 1199.0,592.5 1181.9,591.0" fill="#0a0a0a" stroke="none" stroke-width="0.7" stroke-linejoin="round" />
<polygon points="1190.4,573.3 1180.4,593.0 1200.5,594.5" fill="none" stroke="#151515" stroke-width="0.7" stroke-linejoin="round" />
<polygon points="1232.9,575.6 1222.5,595.9 1244.4,597.4" fill="#7a8f92" stroke="#151515" stroke-width="0.7" stroke-linejoin="round" />
<polygon points="1222.5,595.9 1244.4,597.4 1242.9,595.4 1224.0,593.9" fill="#0a0a0a" stroke="none" stroke-width="0.7" stroke-linejoin="round" />
<polygon points="1232.9,575.6 1222.5,595.9 1244.4,597.4" fill="none" stroke="#151515" stroke-width="0.7" stroke-linejoin="round" />
<polygon points="1280.0,578.6 1267.8,598.8 1292.5,600.8" fill="#7a8f92" stroke="#151515" stroke-width="0.7" stroke-linejoin="round" />
<polygon points="1267.8,598.8 1292.5,600.8 1291.0,598.8 1269.3,596.8" fill="#0a0a0a" stroke="none" stroke-width="0.7" stroke-linejoin="round" />
<polygon points="1280.0,578.6 1267.8,598.8 1292.5,600.8" fill="none" stroke="#151515" stroke-width="0.7" stroke-linejoin="round" />
<polygon points="1331.5,581.0 1318.4,602.5 1345.4,604.8" fill="#7a8f92" stroke="#151515" stroke-width="0.7" stroke-linejoin="round" />
<polygon points="1318.4,602.5 1345.4,604.8 1343.9,602.8 1319.9,600.5" fill="#0a0a0a" stroke="none" stroke-width="0.7" stroke-linejoin="round" />
<polygon points="1331.5,581.0 1318.4,602.5 1345.4,604.8" fill="none" stroke="#151515" stroke-width="0.7" stroke-linejoin="round" />
<path d="M1309.3,613.8 L1334.7,616 V651.5 Q1322,655.5 1309.3,651.5 Z" fill="url(#legg)" stroke="#151515" stroke-width="0.7" stroke-linejoin="round" />
<line x1="1318.4" y1="614.6" x2="1318.4" y2="653.2" stroke="#151515" stroke-width="0.7"/>
<line x1="1331.2" y1="615.7" x2="1331.2" y2="652.4" stroke="#151515" stroke-width="0.7"/>
<path d="M1412.5,596 H1452 V621 Q1432,623.5 1412.5,621.6 Z" fill="#a3b4b6" stroke="#151515" stroke-width="0.7" stroke-linejoin="round" />
<line x1="1427.0" y1="596.0" x2="1427.0" y2="622.0" stroke="#151515" stroke-width="0.7"/>
<line x1="1445.8" y1="596.0" x2="1445.8" y2="621.5" stroke="#151515" stroke-width="0.7"/>
<polygon points="1445.8,596.0 1452.0,596.0 1452.0,621.0 1445.8,621.6" fill="#8fa3a6" stroke="#151515" stroke-width="0.7" stroke-linejoin="round" />
<path d="M1374,619.7 L1395.5,621.2 Q1395,624.5 1385,625.3 Q1375.5,624.5 1374,619.7 Z" fill="#cbc5a8" stroke="#6e6a55" stroke-width="0.5" stroke-linejoin="round" />
<path d="M1419,621.9 H1441 Q1440,627.5 1430,628.8 Q1420,627.5 1419,621.9 Z" fill="#cbc5a8" stroke="#6e6a55" stroke-width="0.5" stroke-linejoin="round" />
<line x1="1430.0" y1="622.0" x2="1430.0" y2="628.6" stroke="#6e6a55" stroke-width="0.6"/>
<path d="M1366.8,577.8 H1488.9 V583 L1477.4,594.5 Q1428,598.5 1380,594.5 L1366.8,583 Z" fill="url(#motg)" stroke="#151515" stroke-width="0.7" stroke-linejoin="round" />
<line x1="1366.8" y1="581.5" x2="1488.9" y2="581.5" stroke="#151515" stroke-width="0.7"/>
<line x1="1367.5" y1="584.0" x2="1488.3" y2="584.0" stroke="#151515" stroke-width="0.5"/>
<path d="M1366.8,515 H1488.9 V577.8 H1366.8 Z" fill="url(#motg)" stroke="#151515" stroke-width="0.7" stroke-linejoin="round" />
<line x1="1431.2" y1="515.0" x2="1431.2" y2="596.5" stroke="#151515" stroke-width="0.7"/>
<path d="M1387.5,494 H1468.5 L1488.9,515 H1366.8 Z" fill="#c7c1a5" stroke="#151515" stroke-width="0.7" stroke-linejoin="round" />
<polygon points="1389.2,499.4 1398.0,499.4 1386.0,514.6 1376.5,514.6" fill="#fdfdfd" stroke="#151515" stroke-width="0.6" stroke-linejoin="round" />
<polygon points="1462.7,499.4 1466.5,499.4 1477.3,514.6 1474.0,514.6" fill="#fdfdfd" stroke="#151515" stroke-width="0.6" stroke-linejoin="round" />
<line x1="1395.0" y1="494.5" x2="1392.5" y2="499.4" stroke="#151515" stroke-width="0.7"/>
<line x1="1402.0" y1="494.5" x2="1393.0" y2="514.6" stroke="#151515" stroke-width="0.7"/>
<line x1="1378.5" y1="506.5" x2="1378.5" y2="514.6" stroke="#151515" stroke-width="0.7"/>
<line x1="1478.7" y1="506.5" x2="1478.7" y2="514.6" stroke="#151515" stroke-width="0.7"/>
<line x1="1461.0" y1="494.5" x2="1474.0" y2="514.6" stroke="#151515" stroke-width="0.7"/>
<path d="M1414.8,514.6 V504 Q1415.5,496 1420,494.5 H1442 Q1447.5,500 1448.5,514.6 Z" fill="#c4bea2" stroke="#151515" stroke-width="0.6" stroke-linejoin="round" />
<path d="M1414.8,507 H1440.5 V514.6 H1414.8 Z" fill="#fdfdfd" stroke="#151515" stroke-width="0.5" stroke-linejoin="round" />
<path d="M1416,506 Q1417,500.5 1421,500 H1438 Q1441.5,500.5 1441.5,506" fill="none" stroke="#151515" stroke-width="0.7" stroke-linejoin="round" />
<path d="M1422,500.5 H1434.8 V514.6 H1422 Z" fill="#c9c3a7" stroke="#151515" stroke-width="0.6" stroke-linejoin="round" />
<line x1="1428.8" y1="500.5" x2="1428.8" y2="514.6" stroke="#151515" stroke-width="0.7"/>
<path d="M1444,496 Q1447,505 1447,514.6" fill="none" stroke="#151515" stroke-width="0.7" stroke-linejoin="round" />
<path d="M1386.3,474 H1469.6 Q1471.8,474 1471.8,476.2 V492 Q1471.8,494.3 1469.6,494.3 H1386.3 Q1384.1,494.3 1384.1,492 V476.2 Q1384.1,474 1386.3,474 Z" fill="url(#motg)" stroke="#151515" stroke-width="0.7" stroke-linejoin="round" />
<path d="M1408.3,421 Q1428,417.5 1447.7,421 V441.5 H1408.3 Z" fill="#cac4a8" stroke="#151515" stroke-width="0.7" stroke-linejoin="round" />
<line x1="1429.5" y1="419.3" x2="1429.5" y2="441.0" stroke="#151515" stroke-width="0.7"/>
<path d="M1397.3,447 Q1398,441.5 1428,441.3 Q1458.7,441.5 1458.7,445 V473.5 H1397.3 Z" fill="url(#hubg)" stroke="#151515" stroke-width="0.5" stroke-linejoin="round" />
<path d="M1075,445 Q1075.3,442.8 1081,441.6 Q1150,433 1221.4,432 Q1302,432.2 1382.7,437.6 L1426,443 Q1405,446 1397.5,462.7 Q1380,466 1362.5,466.9 Q1292,470.5 1221.4,465.4 Q1140,455.5 1081,448.7 Q1075.2,447.5 1075,445 Z" fill="url(#bladeL)" stroke="#151515" stroke-width="0.6" stroke-linejoin="round" />
<path d="M1412,441.2 L1387.5,463.5" fill="none" stroke="#151515" stroke-width="0.5" stroke-linejoin="round" />
<path d="M1409,440.8 L1384,464" fill="none" stroke="#151515" stroke-width="0.4" stroke-linejoin="round" />
<line x1="1088.5" y1="440.8" x2="1084.5" y2="449.2" stroke="#151515" stroke-width="0.4"/>
<line x1="1096.0" y1="439.8" x2="1091.0" y2="450.0" stroke="#151515" stroke-width="0.4"/>
<path d="M1458.7,447.2 Q1493,445.5 1527.6,446.3 Q1571,447.5 1615,450.6 Q1675,455 1726,460.6 Q1690,462 1647,466.2 Q1611,470.5 1575.4,470.2 Q1538,469.5 1503.7,466.2 Q1478,463.5 1454,459.5 L1458.7,458.5 Z" fill="url(#bladeR)" stroke="#151515" stroke-width="0.6" stroke-linejoin="round" />
<line x1="1459.0" y1="448.0" x2="1470.5" y2="460.8" stroke="#151515" stroke-width="0.4"/></g></svg>
<div class="t " id="t0" style="left:79.0px;top:13.00px;font-size:19.5px;letter-spacing:-0.455px;color:#1b7aa8;">Drone_Workshop_Session_4_Level...</div>
<div class="t " id="t1" style="left:466.0px;top:15.30px;font-size:13px;letter-spacing:0.062px;color:#333;">Mesh Creator</div>
<div class="t " id="t2" style="left:595.0px;top:15.30px;font-size:13px;letter-spacing:-0.071px;color:#333;">Simulation Designer</div>
<div class="t " id="t3" style="left:755.0px;top:15.30px;font-size:13px;letter-spacing:-0.062px;color:#333;">Post-Processor</div>
<div class="t " id="t4" style="left:842.5px;top:5.00px;font-size:9px;letter-spacing:-0.586px;color:#1e8e1e;">BETA</div>
<div class="t " id="t5" style="left:1477.0px;top:16.00px;font-size:13px;letter-spacing:-0.068px;color:#333;">Dashboard</div>
<div class="t " id="t6" style="left:1560.0px;top:16.00px;font-size:13px;letter-spacing:-0.166px;color:#333;">Public Projects</div>
<div class="t " id="t7" style="left:1664.0px;top:16.00px;font-size:13px;letter-spacing:-0.212px;color:#333;">Forum</div>
<div class="t " id="t8" style="left:1721.0px;top:16.00px;font-size:13px;letter-spacing:0.062px;color:#333;">Help</div>
<div class="t " id="t9" style="left:1835.0px;top:16.00px;font-size:13px;letter-spacing:-0.301px;color:#333;">nava</div>
<div class="t " id="t10" style="left:34.5px;top:63.00px;font-size:12px;letter-spacing:-0.225px;color:#1b7aa8;">Upload CAD/mesh</div>
<div class="t " id="t11" style="left:183.5px;top:63.00px;font-size:12px;letter-spacing:0.497px;color:#1b7aa8;">Import</div>
<div class="t " id="t12" style="left:16.3px;top:104.00px;font-size:13px;color:#222;">Geometries</div>
<div class="t " id="t13" style="left:32.0px;top:122.00px;font-size:13px;letter-spacing:-0.116px;color:#222;">QuarterModel_separatedScrews</div>
<div class="t " id="t14" style="left:16.3px;top:140.00px;font-size:13px;color:#222;">Meshes</div>
<div class="t " id="t15" style="left:32.0px;top:158.00px;font-size:13px;letter-spacing:-0.059px;color:#222;">QuarterModel_separatedScrews mesh</div>
<div class="t " id="t16" style="left:47.4px;top:179.00px;font-size:13px;letter-spacing:0.126px;color:#222;">Topological Entity Sets</div>
<div class="t " id="t17" style="left:48.0px;top:200.00px;font-size:13px;color:#222;">Mesh Operations</div>
<div class="t " id="t18" style="left:64.0px;top:218.00px;font-size:13px;color:#222;">Mesh</div>
<div class="t " id="t19" style="left:80.0px;top:236.00px;font-size:13px;color:#222;">Mesh Refinements</div>
<div class="t " id="t20" style="left:91.5px;top:257.00px;font-size:13px;color:#1b7aa8;font-weight:bold;text-decoration:underline;">&nbsp;Mesh Refinement 1</div>
<div class="t " id="t21" style="left:12.3px;top:797.70px;font-size:13px;letter-spacing:-0.214px;color:#1b7aa8;">Job Status</div>
<div class="t " id="t22" style="left:13.4px;top:830.60px;font-size:13px;color:#444;font-weight:bold;">Name</div>
<div class="t " id="t23" style="left:137.0px;top:830.60px;font-size:13px;color:#444;font-weight:bold;">Status</div>
<div class="t " id="t24" style="left:98.4px;top:853.00px;font-size:13px;letter-spacing:-0.048px;color:#333;">no entities available</div>
<div class="t " id="t25" style="left:334.5px;top:57.00px;font-size:21px;letter-spacing:-0.242px;color:#333;">Mesh Refinements</div>
<div class="t " id="t26" style="left:754.5px;top:64.00px;font-size:11px;letter-spacing:-0.395px;color:#fff;">Save</div>
<div class="t " id="t27" style="left:334.8px;top:109.00px;font-size:13px;color:#333;">Name</div>
<div class="t " id="t28" style="left:334.8px;top:148.00px;font-size:13px;color:#333;">Type</div>
<div class="t " id="t29" style="left:590.2px;top:117.00px;font-size:13px;color:#555;">High Stress Zone Refinement</div>
<div class="t " id="t30" style="left:594.4px;top:156.00px;font-size:13px;color:#555;">Local element size</div>
<div class="t " id="t31" style="left:351.0px;top:187.00px;font-size:13px;color:#000;font-style:italic;">Details</div>
<div class="t " id="t32" style="left:351.0px;top:211.00px;font-size:13px;letter-spacing:0.002px;color:#333;">Maximum element edge length [m]</div>
<div class="t " id="t33" style="left:351.0px;top:250.00px;font-size:13px;color:#333;">Minimum element edge length [m]</div>
<div class="t " id="t34" style="left:351.0px;top:289.00px;font-size:13px;letter-spacing:-0.149px;color:#333;">Overall mesh fineness</div>
<div class="t " id="t35" style="left:598.0px;top:218.00px;font-size:13px;color:#555;">0.0008</div>
<div class="t " id="t36" style="left:598.0px;top:257.00px;font-size:13px;color:#555;">0.0008</div>
<div class="t " id="t37" style="left:601.8px;top:296.00px;font-size:13px;color:#555;">3 - Moderate</div>
<div class="t " id="t38" style="left:334.5px;top:362.00px;font-size:18px;letter-spacing:-0.069px;color:#1b7aa8;">Topological Mapping</div>
<div class="t " id="t39" style="left:334.5px;top:400.00px;font-size:13px;letter-spacing:0.107px;color:#333;">Filter for entity types</div>
<div class="t " id="t40" style="left:594.0px;top:407.00px;font-size:13px;color:#555;">face sets</div>
<div class="t " id="t41" style="left:367.5px;top:462.40px;font-size:13px;color:#444;font-weight:bold;">Assigned</div>
<div class="t " id="t42" style="left:463.2px;top:462.40px;font-size:13px;color:#444;font-weight:bold;">Entity/Assignment</div>
<div class="t " id="t43" style="left:441.2px;top:493.00px;font-size:13px;color:#333;">refinement_set_1</div>
<div class="t " id="t44" style="left:441.2px;top:528.00px;font-size:13px;color:#333;">refinement_set_2</div>
<div class="t " id="t45" style="left:441.2px;top:563.00px;font-size:13px;color:#333;">refinement_set_3</div>
<div class="t " id="t46" style="left:352.5px;top:741.00px;font-size:12px;letter-spacing:-0.104px;color:#4da0c4;">Add selection from viewer</div>
<div class="t " id="t47" style="left:515.7px;top:741.00px;font-size:12px;letter-spacing:-0.415px;color:#1b7aa8;">Select assignment</div>
<div class="t " id="t48" style="left:633.8px;top:741.00px;font-size:12px;letter-spacing:-0.417px;color:#1b7aa8;">Clear</div>
<div class="t " id="t49" style="left:908.0px;top:57.00px;font-size:12px;letter-spacing:0.254px;color:#1b7aa8;">Orientation</div>
<div class="t " id="t50" style="left:1012.0px;top:57.00px;font-size:13px;color:#444;">surfaces with wireframe</div>
<div class="t " id="t51" style="left:1292.0px;top:57.00px;font-size:12px;letter-spacing:-0.208px;color:#1b7aa8;">Selection</div>
<div class="t " id="t52" style="left:1436.0px;top:57.00px;font-size:12px;letter-spacing:-0.336px;color:#1b7aa8;">Create set</div>
<div class="t " id="t53" style="left:1503.0px;top:57.00px;font-size:12px;letter-spacing:0.055px;color:#1b7aa8;">Filter</div>
<div class="t " id="t54" style="left:1661.3px;top:127.00px;font-size:11px;color:#5d9fc0;">Scene</div>
<div class="t " id="t55" style="left:1677.4px;top:146.00px;font-size:11px;color:#5d9fc0;">QuarterModel_separatedScr…</div>
<div class="t " id="t56" style="left:1711.3px;top:165.80px;font-size:11px;color:#5d9fc0;">solid_5</div>
<div class="t " id="t57" style="left:1711.3px;top:185.80px;font-size:11px;color:#5d9fc0;">solid_4</div>
<div class="t " id="t58" style="left:1711.3px;top:205.80px;font-size:11px;color:#5d9fc0;">solid_3</div>
<div class="t " id="t59" style="left:1711.3px;top:225.80px;font-size:11px;color:#5d9fc0;">solid_2</div>
<div class="t " id="t60" style="left:1711.3px;top:245.80px;font-size:11px;color:#5d9fc0;">solid_1</div>
<div class="t " id="t61" style="left:1711.3px;top:265.80px;font-size:11px;color:#5d9fc0;">solid_0</div>
<div class="t " id="t62" style="left:1677.4px;top:285.90px;font-size:11px;color:#5d9fc0;">Topological Entity Sets</div>
<div class="t " id="t63" style="left:1700.2px;top:308.70px;font-size:11px;color:#5d9fc0;">refinement_set_1</div>
<div class="t " id="t64" style="left:1700.2px;top:334.90px;font-size:11px;color:#5d9fc0;">refinement_set_2</div>
<div class="t " id="t65" style="left:1700.2px;top:360.80px;font-size:11px;color:#5d9fc0;">refinement_set_3</div>
<div class="t " id="t66" style="left:885.4px;top:834.00px;font-size:22px;color:#36b436;transform:scaleX(0.88);font-weight:bold;font-style:italic;font-family:'DejaVu Sans Condensed','DejaVu Sans','Liberation Sans',sans-serif;transform-origin:0 100%;">Y</div>
<div class="t " id="t67" style="left:882.6px;top:873.00px;font-size:32px;color:#7878ff;transform:scaleX(0.9);font-weight:bold;font-style:italic;font-family:'DejaVu Sans Condensed','DejaVu Sans','Liberation Sans',sans-serif;transform-origin:0 100%;">Z</div>
<div class="t " id="t68" style="left:933.2px;top:882.00px;font-size:22px;color:#e01414;transform:scaleX(0.88);font-weight:bold;font-style:italic;font-family:'DejaVu Sans Condensed','DejaVu Sans','Liberation Sans',sans-serif;transform-origin:0 100%;">X</div>

</body></html>
